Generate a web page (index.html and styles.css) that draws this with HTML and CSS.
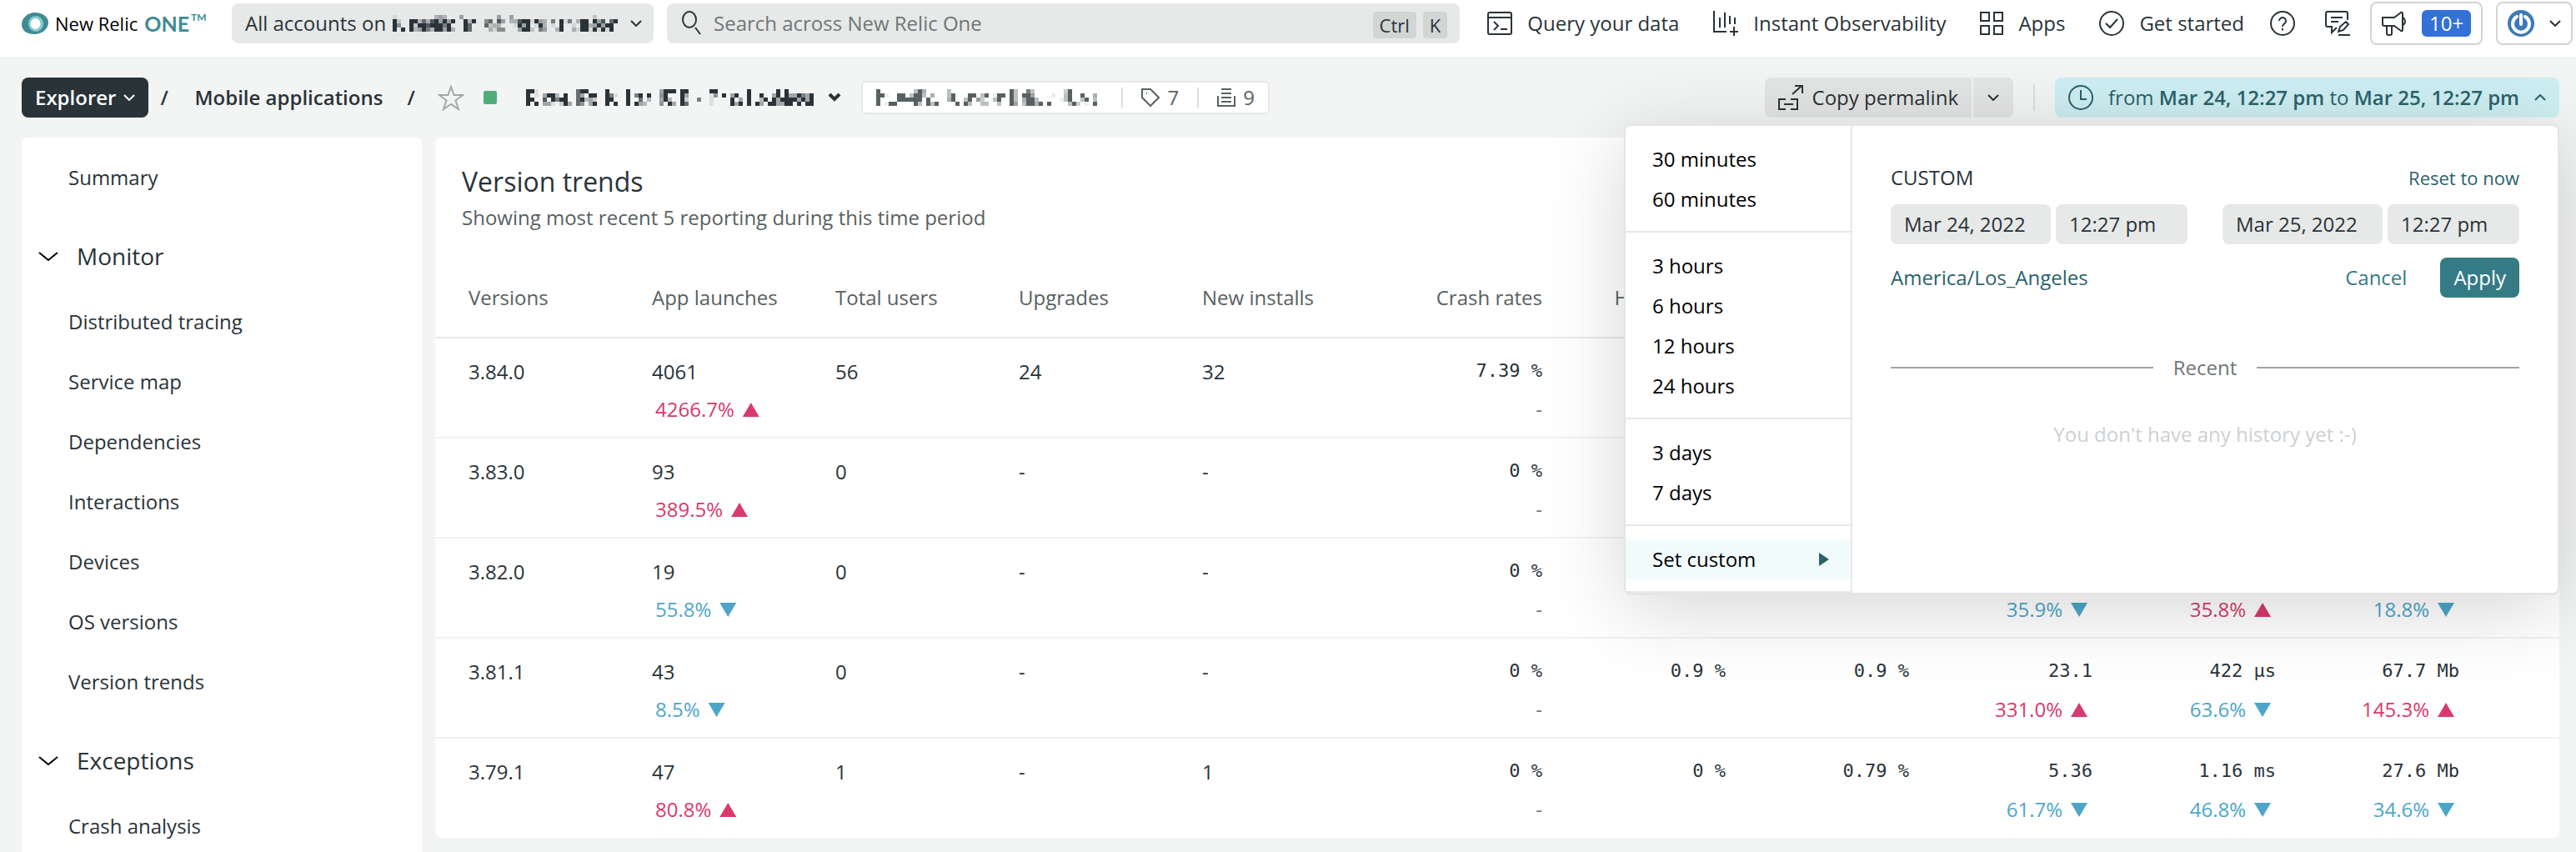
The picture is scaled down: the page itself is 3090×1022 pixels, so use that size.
FILE: index.html
```html
<!DOCTYPE html>
<html lang="en">
<head>
<meta charset="utf-8">
<title>Version trends - New Relic One</title>
<link rel="stylesheet" href="styles.css">
<script src="mosaic.js" defer></script>
</head>
<body>
<div class="app">
<header class="topbar">
  <a class="logo" href="#">
    <svg width="32" height="26" viewBox="0 0 32 26"><path d="M16 0C25 0 32 5 32 12S25 26 15 26 0 21 0 14 7 0 16 0Z" fill="#3f8b95"/><ellipse cx="17" cy="13.500" rx="9" ry="9.500" fill="#87c9d0"/><ellipse cx="16.500" cy="13.500" rx="6" ry="6.500" fill="#fff"/></svg>
    <span class="logo-name">New Relic</span><span class="logo-one">ONE</span><sup class="logo-tm">TM</sup>
  </a>
  <button class="account" aria-haspopup="listbox" aria-label="All accounts">
    <span>All accounts on</span>
    <svg class="mosaic mosaic-dark account-name" width="270" height="20" data-rows="100000000034300040000000040040000000000000000000200000|920099373894949009390057084033899194306091603990948079|950092998999690009700072330001949019301090010993494990|909093496399493009700003155000499206400390031991919190"></svg>
    <svg width="14" height="8" class="line"><path d="M1 1l6 6 6-6"/></svg>
  </button>
  <label class="search">
    <svg width="24" height="30" class="line"><ellipse cx="9" cy="10.500" rx="8" ry="9.500"/><path d="M16 20l6 8"/></svg>
    <input type="text" placeholder="Search across New Relic One" aria-label="Search">
    <kbd>Ctrl</kbd><kbd>K</kbd>
  </label>
  <nav class="topnav">
    <a href="#"><svg width="30" height="28" class="line"><rect x="1" y="1" width="28" height="26" rx="2"/><path d="M1 7h28M8 12l5 5-5 5M16 21h8"/></svg>Query your data</a>
    <a href="#"><svg width="30" height="30" class="line"><path d="M1 0v25h15M8 8v12M14 2v18M20 6v10M26 8v8M25 19v11M20 25h10"/></svg>Instant Observability</a>
    <a href="#"><svg width="28" height="28" class="line"><path d="M1 1h10v10H1zM17 1h10v10H17zM1 17h10v10H1zM17 17h10v10H17z"/></svg>Apps</a>
    <a href="#"><svg width="30" height="30" class="line"><circle cx="15" cy="15" r="14"/><path d="M8 15l5 5L22 10"/></svg>Get started</a>
  </nav>
  <div class="tools">
    <button class="plain" aria-label="Help"><svg width="30" height="30" class="line"><circle cx="15" cy="15" r="14"/><path d="M11 12a4 4 0 1 1 6 3.500c-1.500 1-2 1.500-2 3.500M15 21v2.500"/></svg></button>
    <button class="plain" aria-label="Feedback"><svg width="30" height="30" class="line"><path d="M14 20l-6 6v-7H3a2 2 0 0 1-2-2V3a2 2 0 0 1 2-2h22a2 2 0 0 1 2 2v8M7 8h14M7 13h9M16 25l2-6 7-6 3 3-6 7zM16 29h14"/></svg></button>
  </div>
  <button class="boxed news" aria-label="What's new"><svg width="30" height="30" class="line"><path d="M1 8h14l8-6q2-1 2 2v18q0 3-2 2l-8-6H3a2 2 0 0 1-2-2zM6 19v8a2 2 0 0 0 2 2h2a2 2 0 0 0 2-2V17M26 8q4 5 0 9"/></svg><span class="count">10+</span></button>
  <button class="boxed user" aria-label="User menu"><svg width="32" height="32"><circle cx="16" cy="16" r="16" fill="#3c7bb5"/><path d="M11 8a10 10 0 1 0 10 0M16 6v11" fill="none" stroke="#fff" stroke-width="4" stroke-linecap="round"/></svg><svg width="14" height="8" class="line"><path d="M1 1l6 6 6-6"/></svg></button>
</header>

<div class="crumbs">
  <button class="explorer">Explorer<svg width="14" height="8" class="line"><path d="M1 1l6 6 6-6"/></svg></button>
  <span class="slash">/</span>
  <a class="crumb" href="#">Mobile applications</a>
  <span class="slash">/</span>
  <button class="plain star" aria-label="Favorite"><svg width="32" height="32"><path d="M16 3l3.500 10H30l-8.500 6.500L25 30l-9-6-9 6 3.500-10.500L2 13h10.500z" fill="none" stroke="#a3a8a7" stroke-width="2"/></svg></button>
  <span class="status"></span>
  <button class="plain entity" aria-label="Switch entity">
    <svg class="mosaic mosaic-dark" width="346" height="20" data-rows="991000000000799000090000900000004999099000009900000009000000909000000|901049930900740990096100906909005900094000001509049009009004909449649|990080969900793420099000900703004930092006001000090409003909499994949|909044102940750490090900909430005094097000001000094909094099449909099"></svg>
    <svg width="16" height="11"><path d="M2 2l6 6 6-6" fill="none" stroke="#293338" stroke-width="4"/></svg>
  </button>
  <div class="tags">
    <svg class="mosaic mosaic-gray" width="265" height="20" data-rows="90000000049500000400000000000000940084000000039000000|99100990499405000490009904901990940996000010049009005|90000999999090000590049063004900940599400000149004904|90199000094094900009094004400400960499590900004930109"></svg>
    <span class="rule"></span>
    <a href="#"><svg width="22" height="22" class="line"><path d="M1 1h10l10 10-10 10L1 11z"/><path d="M6 6h1"/></svg>7</a>
    <span class="rule"></span>
    <a href="#"><svg width="22" height="22" class="line"><path d="M1 9v12h20V9M5 1h12M5 6h12M5 11h12M5 16h12"/></svg>9</a>
  </div>
  <div class="split">
    <button class="permalink"><svg width="30" height="30" class="line"><path d="M17 11L28 1M20 1h9v9M9 17H1v12h8M15 17h8v12h-8M7 23h11"/></svg>Copy permalink</button>
    <button class="more" aria-label="More"><svg width="14" height="8" class="line"><path d="M1 1l6 6 6-6"/></svg></button>
  </div>
  <span class="rule"></span>
  <div class="picker">
    <button class="time"><svg width="30" height="30" class="line"><circle cx="15" cy="15" r="14"/><path d="M15 6v11h7"/></svg><span>from <b>Mar 24, 12:27 pm</b> to <b>Mar 25, 12:27 pm</b></span><svg width="14" height="8" class="line"><path d="M1 7l6-6 6 6"/></svg></button>
    <div class="popover">
      <div class="ranges">
        <div class="group"><button>30 minutes</button><button>60 minutes</button></div>
        <div class="group"><button>3 hours</button><button>6 hours</button><button>12 hours</button><button>24 hours</button></div>
        <div class="group"><button>3 days</button><button>7 days</button></div>
        <div class="group"><button class="selected">Set custom<svg width="12" height="16"><path d="M0 0l12 8-12 8z" fill="#2a626b"/></svg></button></div>
      </div>
      <form class="custom">
        <div class="custom-head"><span>CUSTOM</span><a href="#">Reset to now</a></div>
        <div class="dates">
          <div class="pair"><input class="date" type="text" value="Mar 24, 2022" aria-label="Start date"><input class="hour" type="text" value="12:27 pm" aria-label="Start time"></div>
          <div class="pair"><input class="date" type="text" value="Mar 25, 2022" aria-label="End date"><input class="hour" type="text" value="12:27 pm" aria-label="End time"></div>
        </div>
        <div class="actions"><a class="zone" href="#">America/Los_Angeles</a><button class="cancel" type="button">Cancel</button><button class="apply" type="button">Apply</button></div>
        <div class="recent">Recent</div>
        <p class="empty">You don't have any history yet :-)</p>
      </form>
    </div>
  </div>
</div>

<div class="content">
  <nav class="sidebar">
    <a href="#">Summary</a>
    <button class="section"><svg width="24" height="12"><path d="M1 2l11 9 11-9" fill="none" stroke="#000" stroke-width="2"/></svg>Monitor</button>
    <a href="#">Distributed tracing</a>
    <a href="#">Service map</a>
    <a href="#">Dependencies</a>
    <a href="#">Interactions</a>
    <a href="#">Devices</a>
    <a href="#">OS versions</a>
    <a href="#">Version trends</a>
    <button class="section"><svg width="24" height="12"><path d="M1 2l11 9 11-9" fill="none" stroke="#000" stroke-width="2"/></svg>Exceptions</button>
    <a href="#">Crash analysis</a>
  </nav>
  <main class="card">
    <h1>Version trends</h1>
    <p class="sub">Showing most recent 5 reporting during this time period</p>
    <table>
      <thead><tr><th>Versions</th><th>App launches</th><th>Total users</th><th>Upgrades</th><th>New installs</th><th class="num">Crash rates</th><th class="num">HTTP errors</th><th></th><th></th><th></th><th></th></tr></thead>
      <tbody>
        <tr><td>3.84.0</td><td>4061<div class="delta up">4266.7%</div></td><td>56</td><td>24</td><td>32</td><td class="num">7.39 %<div class="none">-</div></td><td></td><td></td><td></td><td></td><td></td></tr>
        <tr><td>3.83.0</td><td>93<div class="delta up">389.5%</div></td><td>0</td><td>-</td><td>-</td><td class="num">0 %<div class="none">-</div></td><td></td><td></td><td></td><td></td><td></td></tr>
        <tr><td>3.82.0</td><td>19<div class="delta down">55.8%</div></td><td>0</td><td>-</td><td>-</td><td class="num">0 %<div class="none">-</div></td><td></td><td></td><td class="num">&nbsp;<div class="delta down">35.9%</div></td><td class="num">&nbsp;<div class="delta up">35.8%</div></td><td class="num">&nbsp;<div class="delta down">18.8%</div></td></tr>
        <tr><td>3.81.1</td><td>43<div class="delta down">8.5%</div></td><td>0</td><td>-</td><td>-</td><td class="num">0 %<div class="none">-</div></td><td class="num">0.9 %</td><td class="num">0.9 %</td><td class="num">23.1<div class="delta up">331.0%</div></td><td class="num">422 μs<div class="delta down">63.6%</div></td><td class="num">67.7 Mb<div class="delta up">145.3%</div></td></tr>
        <tr><td>3.79.1</td><td>47<div class="delta up">80.8%</div></td><td>1</td><td>-</td><td>1</td><td class="num">0 %<div class="none">-</div></td><td class="num">0 %</td><td class="num">0.79 %</td><td class="num">5.36<div class="delta down">61.7%</div></td><td class="num">1.16 ms<div class="delta down">46.8%</div></td><td class="num">27.6 Mb<div class="delta down">34.6%</div></td></tr>
      </tbody>
    </table>
  </main>
</div>
</div>
</body>
</html>
```
FILE: styles.css
```css
* { box-sizing: border-box; }
body { margin: 0; background: #f3f4f4; color: #293338; font: 24px/32px "Open Sans", sans-serif; }
button, input { font: inherit; color: inherit; border: 0; margin: 0; padding: 0; background: none; }
button { display: flex; align-items: center; cursor: pointer; }
a { color: inherit; text-decoration: none; }
svg { flex: none; display: block; }
.line { fill: none; stroke: currentColor; stroke-width: 2; }
.app { display: flex; flex-direction: column; height: 100vh; overflow: hidden; }

.topbar { position: relative; z-index: 3; display: flex; align-items: center; height: 68px; padding: 0 4px 12px 26px; background: #fff; white-space: nowrap; flex: none; }
.logo { display: flex; align-items: center; width: 252px; }
.logo-name { margin: 0 8px; font-size: 22px; font-weight: 500; color: #000; }
.logo-one { font: 700 25px/32px Lato, sans-serif; color: #3f8b95; }
.logo-tm { font: 700 12px/16px Lato, sans-serif; color: #3f8b95; margin: 0 0 14px 2px; }
.account { height: 48px; width: 506px; padding: 0 17px 0 16px; border-radius: 8px; background: #e7e9e8; }
.account-name { margin: 0 15px 0 8px; }
.account > span { flex: 1; text-align: left; }
.search { display: flex; align-items: center; flex: 1; height: 48px; margin: 0 33px 0 16px; padding: 0 15px 0 18px; border-radius: 8px; background: #e7e9e8; }
.search input { flex: 1; min-width: 0; margin-left: 14px; outline: 0; }
.search input::placeholder { color: #6f7777; opacity: 1; }
kbd { height: 32px; margin: 4px 0 0 8px; padding: 0 8px; border-radius: 4px; background: #d3d5d4; font: 22px/32px "Open Sans", sans-serif; }
.topnav { display: flex; gap: 41px; }
.topnav a { display: flex; align-items: center; gap: 18px; }
.tools { display: flex; gap: 36px; margin: 0 24px 0 31px; }
.boxed { height: 52px; border: 2px solid #d3d5d4; border-radius: 8px; }
.news { width: 135px; padding-left: 12px; gap: 18px; }
.count { padding: 0 9px; border-radius: 6px; background: #3370d8; color: #fff; }
.user { width: 92px; margin-left: 16px; padding: 0 12px; justify-content: space-between; }

.crumbs { position: relative; z-index: 2; display: flex; align-items: center; flex: none; height: 97px; padding: 0 20px 0 26px; white-space: nowrap; }
.explorer { height: 48px; padding: 0 16px; gap: 9px; border-radius: 8px; background: #293338; color: #fff; font-weight: 600; }
.slash { width: 40px; padding-left: 14px; font-weight: 600; }
.crumb { margin: 0 15px; font-weight: 600; }
.star { margin-left: 11px; }
.status { width: 16px; height: 16px; margin: 0 35px 0 23px; border-radius: 2px; background: #50ad7b; }
.entity { gap: 16px; }
.mosaic { shape-rendering: crispEdges; }
.mosaic-dark { fill: #293338; }
.mosaic-gray { fill: #586161; }
.tags { display: flex; align-items: center; height: 40px; margin: 0 auto 0 24px; padding: 0 16px; border: 2px solid #e7e9e8; border-radius: 6px; background: #fff; color: #586161; }
.tags a { display: flex; align-items: center; gap: 9px; }
.rule { width: 2px; height: 24px; margin: 0 22px; background: #dcdfde; }
.tags .mosaic { margin-right: 7px; }
.split { display: flex; gap: 2px; }
.split button { height: 48px; background: #e3e5e4; }
.permalink { padding: 0 16px; gap: 11px; border-radius: 8px 0 0 8px; }
.split .more { padding: 0 17px; border-radius: 0 8px 8px 0; }
.crumbs > .rule { height: 32px; margin: 0 24px; }
.picker { position: relative; }
.time { height: 48px; padding: 0 16px; gap: 18px; border-radius: 8px; background: #cdeef2; color: #2a626b; }
.time b { font-weight: 600; }

.popover { position: absolute; top: 56px; right: 0; display: flex; width: 1122px; height: 565px; border: 2px solid #e3e6e5; border-bottom-width: 3px; border-radius: 8px; background: #fff; box-shadow: 0 16px 96px rgba(0, 0, 0, .17); }
.ranges { width: 272px; border-right: 2px solid #e7e9e8; color: #000; }
.group { padding: 16px 0 14px; border-bottom: 2px solid #e7e9e8; }
.group button { width: 100%; height: 48px; padding: 0 26px 0 32px; justify-content: space-between; }
.group .selected { background: #f2fbfc; }
.custom { flex: 1; padding: 46px; }
.custom-head, .dates, .actions { display: flex; justify-content: space-between; align-items: center; }
.custom-head a { font-size: 22px; color: #2a626b; }
.dates { margin: 16px 0; }
.pair { display: flex; gap: 6px; }
.pair input { height: 48px; padding: 0 16px; border-radius: 8px; background: #e7e9e8; }
.date { width: 192px; }
.hour { width: 158px; }
.zone { margin-right: auto; color: #2a626b; }
.cancel { color: #357b85; }
.apply { height: 48px; margin-left: 40px; padding: 0 16px; border-radius: 8px; background: #357b85; color: #fff; }
.recent { display: flex; align-items: center; gap: 24px; margin: 68px 0 48px; color: #6f7777; }
.recent::before, .recent::after { content: ""; flex: 1; height: 2px; background: #9fa6a5; }
.empty { margin: 0; text-align: center; color: #cdd0d2; }

.content { display: flex; align-items: stretch; gap: 16px; flex: 1; min-height: 0; padding: 0 20px 0 26px; }
.sidebar { width: 480px; flex: none; padding-top: 12px; overflow: hidden; border-radius: 8px 8px 0 0; background: #fff; }
.sidebar a { display: block; padding: 20px 56px; }
.section { gap: 22px; width: 100%; margin: 22px 0 7px; padding: 20px; font-size: 28px; }
.card { flex: 1; align-self: flex-start; border-radius: 8px; background: #fff; }
h1 { margin: 33px 32px 7px; font: 32px/40px "Open Sans", sans-serif; }
.sub { margin: 0 32px; color: #586161; }
table { width: 100%; margin-top: 32px; border-collapse: collapse; table-layout: fixed; }
th, td { width: 220px; padding: 24px 16px 16px; text-align: left; vertical-align: top; font-weight: 400; white-space: nowrap; }
th:first-child, td:first-child { width: 244px; padding-left: 40px; }
th:last-child, td:last-child { width: auto; padding-right: 120px; }
th { height: 96px; padding: 32px 16px 0; color: #586161; border-bottom: 2px solid #e7e9e8; }
td { height: 120px; border-top: 2px solid #f0f2f1; }
tbody tr:first-child td { border-top: 0; }
.num { text-align: right; }
td.num { font: 22px/30px "DejaVu Sans Mono", monospace; }
.delta, .none { font: 24px/32px "Open Sans", sans-serif; }
td:not(.num) .delta { margin: 13px 4px 0; }
.num .delta { margin: 15px 6px 0 0; }
.none { margin-top: 15px; color: #6f7777; }
.delta::after { content: ""; display: inline-block; width: 20px; height: 17px; margin-left: 10px; background: currentColor; }
.up { color: #d83a6c; }
.down { color: #4da6c8; }
.up::after { clip-path: polygon(50% 0, 100% 100%, 0 100%); }
.down::after { clip-path: polygon(0 0, 100% 0, 50% 100%); }
```
FILE: mosaic.js
```js
// Draws obscured names as 5px blocks; each digit is a block's opacity, 0 to 9.
document.querySelectorAll('.mosaic').forEach(function (svg) {
  svg.dataset.rows.split('|').forEach(function (row, y) {
    row.split('').forEach(function (level, x) {
      if (level === '0') return;
      var block = document.createElementNS('http://www.w3.org/2000/svg', 'rect');
      block.setAttribute('x', x * 5);
      block.setAttribute('y', y * 5);
      block.setAttribute('width', 5);
      block.setAttribute('height', 5);
      block.setAttribute('opacity', level === '9' ? 1 : level / 10);
      svg.appendChild(block);
    });
  });
});
```
